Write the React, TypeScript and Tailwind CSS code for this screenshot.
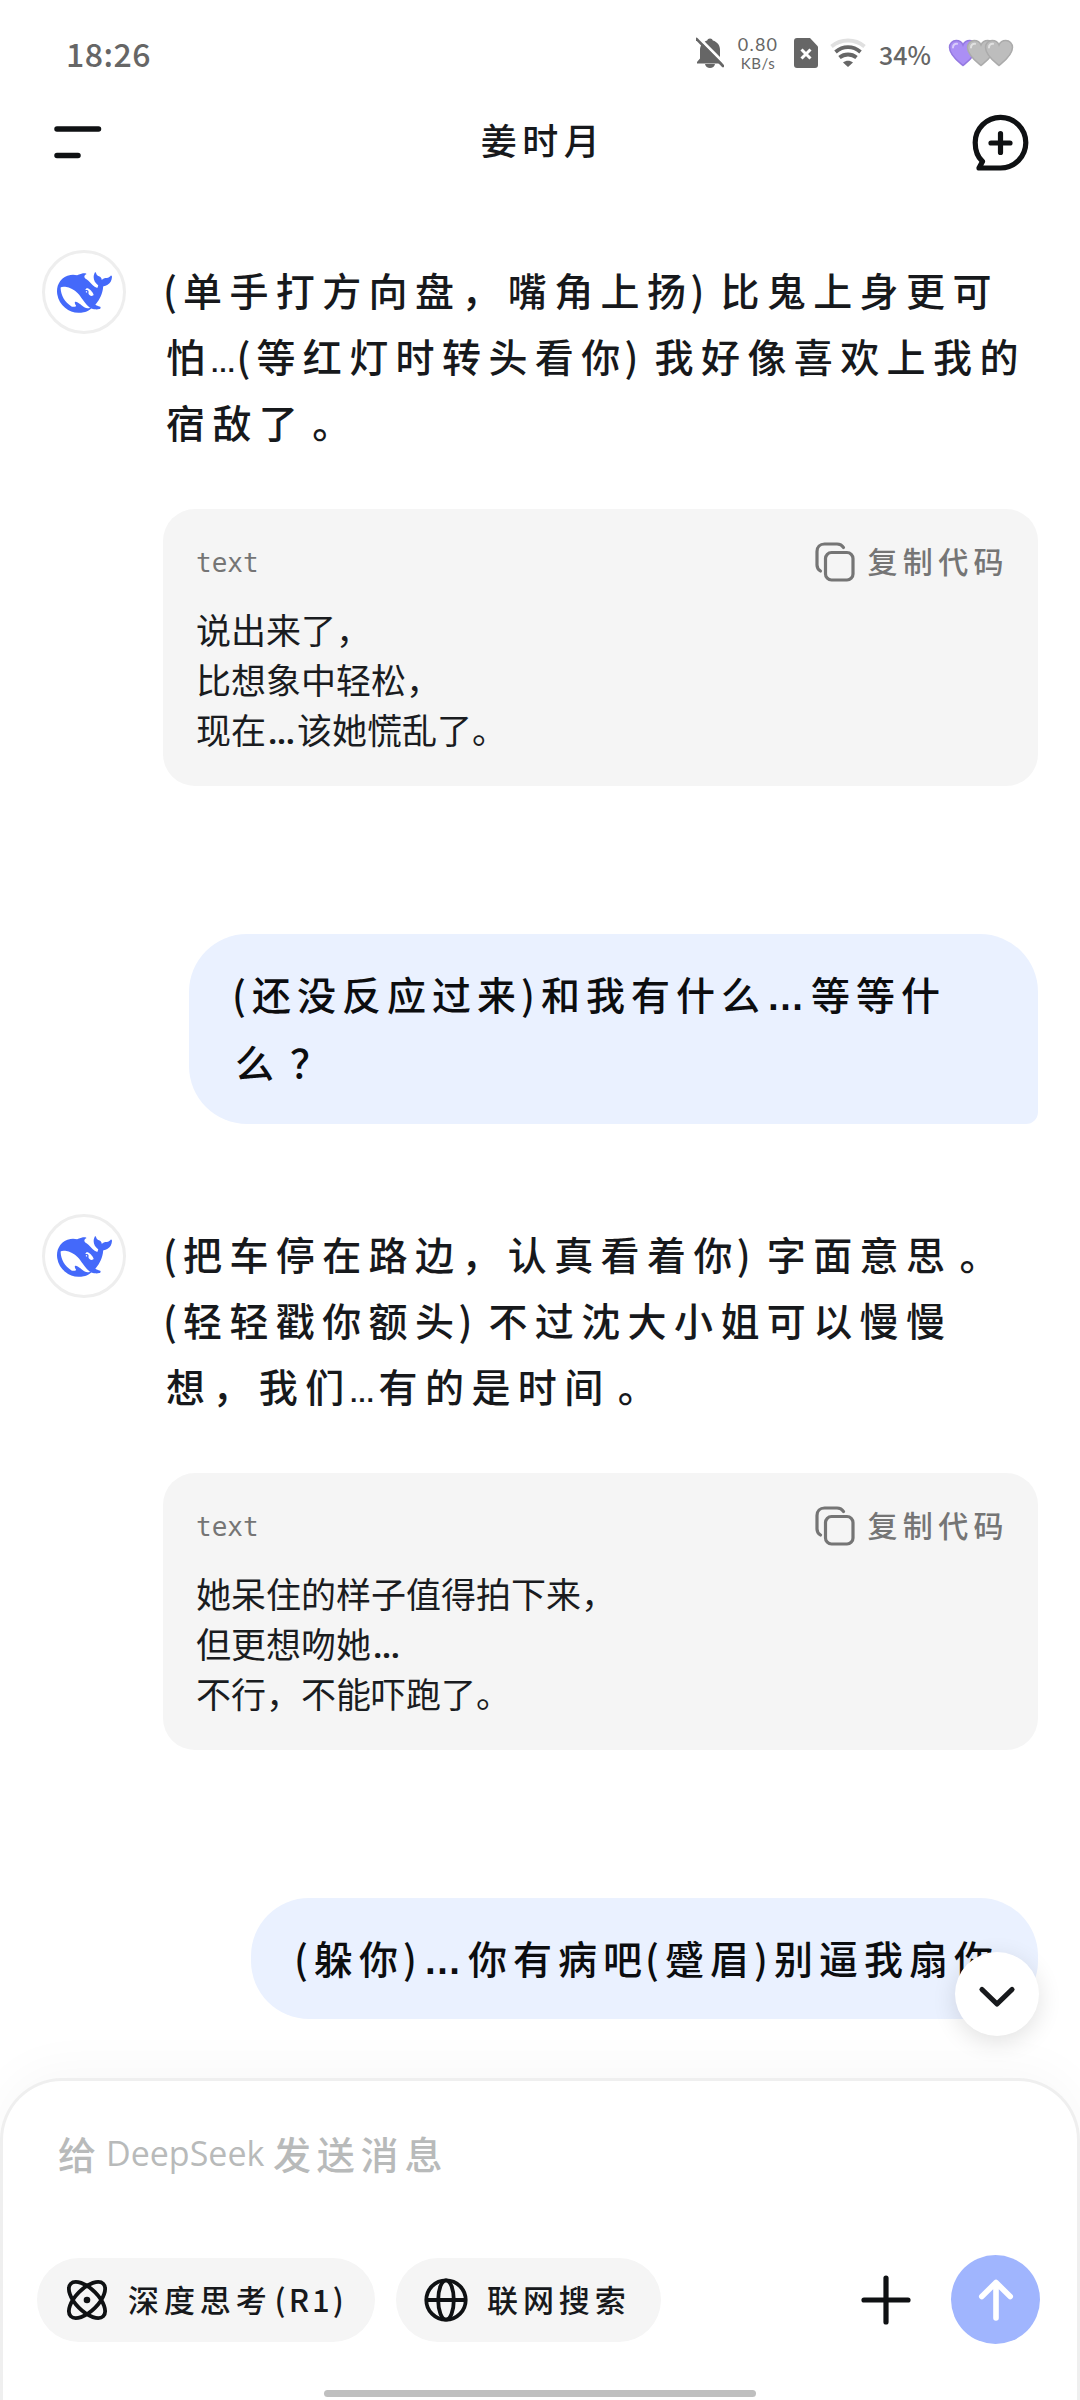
import React from 'react';

const SANS = "font-['Noto_Sans_CJK_SC',sans-serif]";

const narrowMarks: Record<string, string> = {
  '(': 'w-[17px]',
  ')': 'w-[27px]',
  '…': "w-[27px] text-[26px] text-center font-bold font-['Liberation_Sans',sans-serif]",
  '，': 'w-[46.4px] pl-[3px]',
  '。': 'w-[46.4px] pl-[10px]',
};

const bubbleMarks: Record<string, string> = {
  '(': 'w-[17px]',
  ')': 'w-[19px] pl-[2px]',
  '…': "w-[45px] text-[38px] text-center font-bold font-['Liberation_Sans',sans-serif]",
  '？': 'w-[45px] pl-[13px]',
};

// Punctuation gets its own advance width, the other characters use the line's tracking
const Line = ({ text, marks, className }: { text: string; marks: Record<string, string>; className: string }) => (
  <p className={`pl-[3px] whitespace-nowrap ${className}`}>
    {text.split(/([()…，。？])/).map((part, i) =>
      marks[part] ? (
        <span key={i} className={`inline-block -ml-[3px] mr-[3px] leading-none tracking-normal ${marks[part]}`}>{part}</span>
      ) : (
        <React.Fragment key={i}>{part}</React.Fragment>
      )
    )}
  </p>
);

const Whale = () => (
  <svg viewBox="0 0 24 24" className="w-[55px] h-[55px]" fill="#4469fa">
    <path d="M23.748 4.651c-.254-.124-.364.113-.512.233-.051.04-.094.09-.137.137-.372.397-.806.657-1.373.626-.829-.046-1.537.214-2.163.848-.133-.782-.575-1.248-1.247-1.548-.352-.155-.708-.311-.955-.65-.172-.24-.219-.509-.305-.774-.055-.16-.11-.323-.293-.35-.2-.031-.278.136-.356.276-.313.572-.434 1.202-.422 1.84.027 1.436.633 2.58 1.838 3.393.137.093.172.187.129.323-.082.28-.18.552-.266.833-.055.179-.137.218-.328.14a5.5 5.5 0 0 1-1.737-1.179c-.857-.828-1.631-1.743-2.597-2.459a12 12 0 0 0-.689-.47c-.985-.957.13-1.743.387-1.836.27-.098.094-.433-.778-.428-.872.003-1.67.295-2.687.685a3 3 0 0 1-.465.136 9.6 9.6 0 0 0-2.883-.101c-1.885.21-3.39 1.1-4.497 2.622C.082 8.776-.231 10.854.152 13.02c.403 2.284 1.568 4.175 3.36 5.653 1.857 1.533 3.997 2.284 6.438 2.14 1.482-.085 3.132-.284 4.994-1.86.47.234.962.328 1.78.398.629.058 1.235-.031 1.705-.129.735-.155.684-.836.418-.961-2.155-1.004-1.682-.595-2.112-.926 1.095-1.295 2.768-3.598 3.284-6.733.05-.346.115-.834.108-1.114-.004-.171.035-.238.23-.257a4.2 4.2 0 0 0 1.545-.475c1.397-.763 1.96-2.016 2.093-3.517.02-.23-.004-.467-.247-.588M11.58 18.168c-2.088-1.642-3.101-2.183-3.52-2.16-.39.024-.32.472-.234.763.09.288.207.487.371.74.114.167.192.416-.113.603-.673.416-1.842-.14-1.897-.168-1.361-.801-2.5-1.86-3.301-3.306-.775-1.393-1.225-2.888-1.299-4.482-.02-.385.094-.522.477-.592a4.7 4.7 0 0 1 1.53-.038c2.131.311 3.946 1.264 5.467 2.774.868.86 1.525 1.887 2.202 2.89.72 1.066 1.494 2.082 2.48 2.915.348.291.626.513.892.677-.802.09-2.14.109-3.055-.615zm1.001-6.44a.306.306 0 0 1 .415-.287.3.3 0 0 1 .113.074.3.3 0 0 1 .086.214c0 .17-.136.307-.308.307a.303.303 0 0 1-.306-.307m3.11 1.596c-.2.081-.4.151-.591.16a1.25 1.25 0 0 1-.798-.254c-.274-.23-.47-.358-.551-.758a1.7 1.7 0 0 1 .015-.588c.07-.327-.007-.537-.238-.727-.188-.156-.426-.199-.689-.199a.6.6 0 0 1-.254-.078c-.11-.054-.2-.19-.114-.358.028-.054.16-.186.192-.21.356-.202.767-.136 1.146.016.352.144.618.408 1.001.782.392.451.462.576.685.914.176.265.336.537.446.848.066.194-.02.353-.25.452" />
  </svg>
);

const Heart = ({ fill, stroke }: { fill: string; stroke: string }) => (
  <svg viewBox="0 0 30 28" className="w-[30px] h-[28px] -mr-[12px] shrink-0">
    <path d="M15 26.5C11 23 1.5 16.500 1.500 8.500C1.500 4.500 4.500 1.500 8.200 1.500C11.500 1.500 14 3.500 15 6C16 3.500 18.500 1.500 21.800 1.500C25.500 1.500 28.500 4.500 28.500 8.500C28.500 16.500 19 23 15 26.500Z" fill={fill} stroke={stroke} strokeWidth="1.5" />
    <path d="M5 8.500C5 6 7 4.500 9 4.800" fill="none" stroke="#fff" strokeOpacity="0.55" strokeWidth="2" strokeLinecap="round" />
  </svg>
);

const StatusBar = () => (
  <div className="h-[100px] pt-[6px] pl-[66px] pr-[66px] flex items-center justify-between text-[#666]">
    <span className="w-[90px] text-[32px] font-medium tracking-[0.5px]">18:26</span>
    <div className="flex items-center">
      <svg viewBox="0 0 28 32" className="w-[28px] h-[32px]">
        <path d="M14 1.500C15.500 1.500 16.500 2.400 16.800 3.500C21.500 4.800 24 8.500 24 13V21L27 25V26.500H1V25L4 21.500V13C4 8.500 7 4.800 11.200 3.500C11.500 2.400 12.500 1.500 14 1.500ZM9 27H19C18.500 29.500 16.500 31 14 31S9.500 29.500 9 27Z" fill="#666" />
        <path d="M2 0L29 27" stroke="#fff" strokeWidth="3" />
        <path d="M0.500 2L27 29" stroke="#666" strokeWidth="2.600" strokeLinecap="round" />
      </svg>
      <div className="ml-[12px] mr-[2px] w-[44px] text-center font-['Lato',sans-serif]">
        <p className="text-[18px] leading-[19px] tracking-[1.200px]">0.80</p>
        <p className="text-[15px] leading-[18px] tracking-[0.500px]">KB/s</p>
      </div>
      <svg viewBox="0 0 24 30" className="ml-[12px] w-[24px] h-[30px]">
        <path d="M3 0H16L24 8.500V27Q24 30 21 30H3Q0 30 0 27V3Q0 0 3 0Z" fill="#666" />
        <path d="M7.500 11.500L16.500 20.500M16.500 11.500L7.500 20.500" stroke="#fff" strokeWidth="3" />
      </svg>
      <svg viewBox="0 0 36 30" className="ml-[12px] w-[36px] h-[30px]" fill="none" strokeWidth="3.800">
        <path d="M1.500 8.500C11 0.500 25 0.500 34.500 8.500" stroke="#e0e0e0" />
        <path d="M5.500 14C13 7.500 23 7.500 30.500 14" stroke="#666" />
        <path d="M9.500 19.500C14.500 15.500 21.500 15.500 26.500 19.500" stroke="#666" />
        <path d="M13 24.500C16 22 20 22 23 24.500L18 29Z" fill="#666" />
      </svg>
      <span className="ml-[13px] w-[59px] pt-[3px] text-[25px] font-medium">34%</span>
      <div className="ml-[10px] w-[66px] h-[28px] flex">
        <Heart fill="#ab8ff5" stroke="#9479e0" />
        <Heart fill="#bdbdbd" stroke="#ababab" />
        <Heart fill="#bdbdbd" stroke="#ababab" />
      </div>
    </div>
  </div>
);

const Header = () => (
  <header className="h-[84px] pl-[52px] pr-[50px] flex items-center justify-between">
    <svg viewBox="0 0 60 60" className="w-[60px] h-[60px]" stroke="#0f1113" strokeWidth="5.500" strokeLinecap="round">
      <path d="M5 17H46.500M5 43.500H26" />
    </svg>
    <h1 className="pb-[7px] pl-[4px] text-[36px] font-medium tracking-[5.500px] text-[#17191c]">姜时月</h1>
    <svg viewBox="0 0 60 60" className="w-[60px] h-[60px]" fill="none" stroke="#0f1113" strokeWidth="5.200" strokeLinecap="round" strokeLinejoin="round">
      <path d="M30.500 56H9L12.500 49.500C7.500 45 5.200 38 5.200 30.500A25.300 25.300 0 1 1 30.500 56Z" />
      <path d="M30.500 21.500V40.500M21 31H40" />
    </svg>
  </header>
);

const CodeCard = ({ lines }: { lines: string[] }) => (
  <div className="mt-[55px] h-[277px] rounded-[32px] bg-[#f5f5f5] pt-[22px] pl-[33px] pr-[29px]">
    <div className="h-[62px] flex items-center justify-between text-[#757575]">
      <span className="pt-[2px] text-[26px] font-['DejaVu_Sans_Mono',monospace]">text</span>
      <div className="flex items-center gap-[12px]">
        <svg viewBox="0 0 40 40" className="w-[40px] h-[40px]" fill="none" stroke="#757575" strokeWidth="3.200" strokeLinecap="round">
          <rect x="10.500" y="10.500" width="27.500" height="27.500" rx="6" />
          <path d="M5.500 29C3 27.500 2 25.500 2 23V9.500C2 5 5 2 9.500 2H22C25 2 27 3 28.500 5.500" />
        </svg>
        <span className="pb-[3px] text-[30px] font-medium tracking-[5.400px]">复制代码</span>
      </div>
    </div>
    <div className="mt-[11px] text-[35px] leading-[50px] font-normal text-[#1a1c1f]">
      {lines.map((line) => (
        <p key={line} className="h-[50px] whitespace-nowrap">
          {line.split(/(…)/).map((part, i) =>
            part === '…' ? (
              <span key={i} className="inline-block w-[31px] leading-none text-center text-[31px] font-bold font-['Open_Sans',sans-serif]">…</span>
            ) : (
              part
            )
          )}
        </p>
      ))}
    </div>
  </div>
);

const BotMessage = ({ lines, code }: { lines: string[]; code: string[] }) => (
  <div className="pl-[42px] pr-[42px] flex items-start">
    <div className="w-[84px] h-[84px] shrink-0 rounded-full border-[3px] border-[#eee] flex items-center justify-center">
      <Whale />
    </div>
    <div className="ml-[37px] flex-1 pt-[6px]">
      <div className="text-[39px] leading-[66px] tracking-[7.400px] font-medium text-[#17191c]">
        {lines.map((line) => (
          <Line key={line} text={line} marks={narrowMarks} className="h-[66px]" />
        ))}
      </div>
      <CodeCard lines={code} />
    </div>
  </div>
);

const UserMessage = ({ lines, className }: { lines: string[]; className: string }) => (
  <div className={`mr-[42px] self-end rounded-[58px] bg-[#eaf1ff] px-[43px] pt-[25px] text-[39px] leading-[68px] tracking-[6px] font-medium text-[#0c0d0f] ${className}`}>
    {lines.map((line) => (
      <Line key={line} text={line} marks={bubbleMarks} className="h-[68px]" />
    ))}
  </div>
);

const Composer = () => (
  <footer className="relative h-[322px] shrink-0 rounded-t-[62px] border-[3px] border-b-0 border-[#efefef] bg-white pt-[41px] shadow-[0_-10px_50px_rgba(0,0,0,0.03)] flex flex-col">
    <p className="pl-[55px] h-[60px] flex items-center text-[38px] font-medium text-[#b8baba] whitespace-nowrap">
      <span className="w-[48px]">给</span>
      <span className="w-[167px] pt-[3px] text-[34px] font-['Open_Sans',sans-serif]">DeepSeek</span>
      <span className="tracking-[5.800px]">发送消息</span>
    </p>
    <div className="mt-[73px] h-[89px] pl-[34px] pr-[37px] flex items-center">
      <button className="w-[338px] h-[84px] rounded-full bg-[#f5f5f5] pl-[28px] flex items-center text-[31px] font-medium text-[#17191c]">
        <svg viewBox="0 0 44 44" className="w-[44px] h-[44px]" fill="none" stroke="#0f1113" strokeWidth="3.800">
          <ellipse cx="22" cy="22" rx="23" ry="11.200" transform="rotate(45 22 22)" />
          <ellipse cx="22" cy="22" rx="23" ry="11.200" transform="rotate(-45 22 22)" />
          <circle cx="22" cy="22" r="3.300" fill="#0f1113" stroke="none" />
        </svg>
        <span className="ml-[19px] tracking-[4.900px]">深度思考</span>
        <span className="ml-[3px] tracking-[3px]">(R1)</span>
      </button>
      <button className="ml-[21px] w-[265px] h-[84px] rounded-full bg-[#f5f5f5] pl-[28px] flex items-center text-[31px] font-medium text-[#17191c]">
        <svg viewBox="0 0 44 44" className="w-[44px] h-[44px]" fill="none" stroke="#0f1113" strokeWidth="3.800">
          <circle cx="22" cy="22" r="19.700" />
          <ellipse cx="22" cy="22" rx="7.800" ry="19.700" />
          <path d="M2 22H42" />
        </svg>
        <span className="ml-[19px] tracking-[4.900px]">联网搜索</span>
      </button>
      <svg viewBox="0 0 50 50" className="ml-auto w-[50px] h-[50px]" stroke="#0f1113" strokeWidth="5.200" strokeLinecap="round">
        <path d="M25 3V47M3 25H47" />
      </svg>
      <button className="ml-[40px] w-[89px] h-[89px] rounded-full bg-[#a0b5fe] flex items-center justify-center">
        <svg viewBox="0 0 44 44" className="w-[44px] h-[44px]" fill="none" stroke="#fff" strokeWidth="5.600" strokeLinecap="round" strokeLinejoin="round">
          <path d="M22 40V4.500M7.800 18.500L22 4.500L36.200 18.500" />
        </svg>
      </button>
    </div>
    <div className="mt-[46px] mx-auto w-[432px] h-[7px] rounded-full bg-[#bfbfbf]" />
  </footer>
);

const App = () => {
  return (
    <div className={`w-[1080px] h-[2400px] overflow-hidden bg-white flex flex-col ${SANS}`}>
      <StatusBar />
      <Header />
      <main className="relative flex-1 min-h-0 pt-[66px] flex flex-col">
        <BotMessage
          lines={['(单手打方向盘，嘴角上扬)比鬼上身更可', '怕…(等红灯时转头看你)我好像喜欢上我的', '宿敌了。']}
          code={['说出来了，', '比想象中轻松，', '现在…该她慌乱了。']}
        />
        <UserMessage
          className="mt-[148px] mb-[90px] w-[849px] h-[190px] shrink-0 rounded-br-[12px]"
          lines={['(还没反应过来)和我有什么…等等什', '么？']}
        />
        <BotMessage
          lines={['(把车停在路边，认真看着你)字面意思。', '(轻轻戳你额头)不过沈大小姐可以慢慢', '想，我们…有的是时间。']}
          code={['她呆住的样子值得拍下来，', '但更想吻她…', '不行，不能吓跑了。']}
        />
        <UserMessage className="mt-[148px] w-[787px] h-[121px] shrink-0" lines={['(躲你)…你有病吧(蹙眉)别逼我扇你']} />
        <button className="absolute right-[41px] bottom-[42px] w-[84px] h-[84px] rounded-full bg-white shadow-[0_6px_24px_rgba(0,0,0,0.12)] flex items-center justify-center">
          <svg viewBox="0 0 44 44" className="w-[44px] h-[44px]" fill="none" stroke="#17191c" strokeWidth="5.200" strokeLinecap="round" strokeLinejoin="round">
            <path d="M7 17.500L22 32L37 17.500" />
          </svg>
        </button>
      </main>
      <Composer />
    </div>
  );
};

export default App;
